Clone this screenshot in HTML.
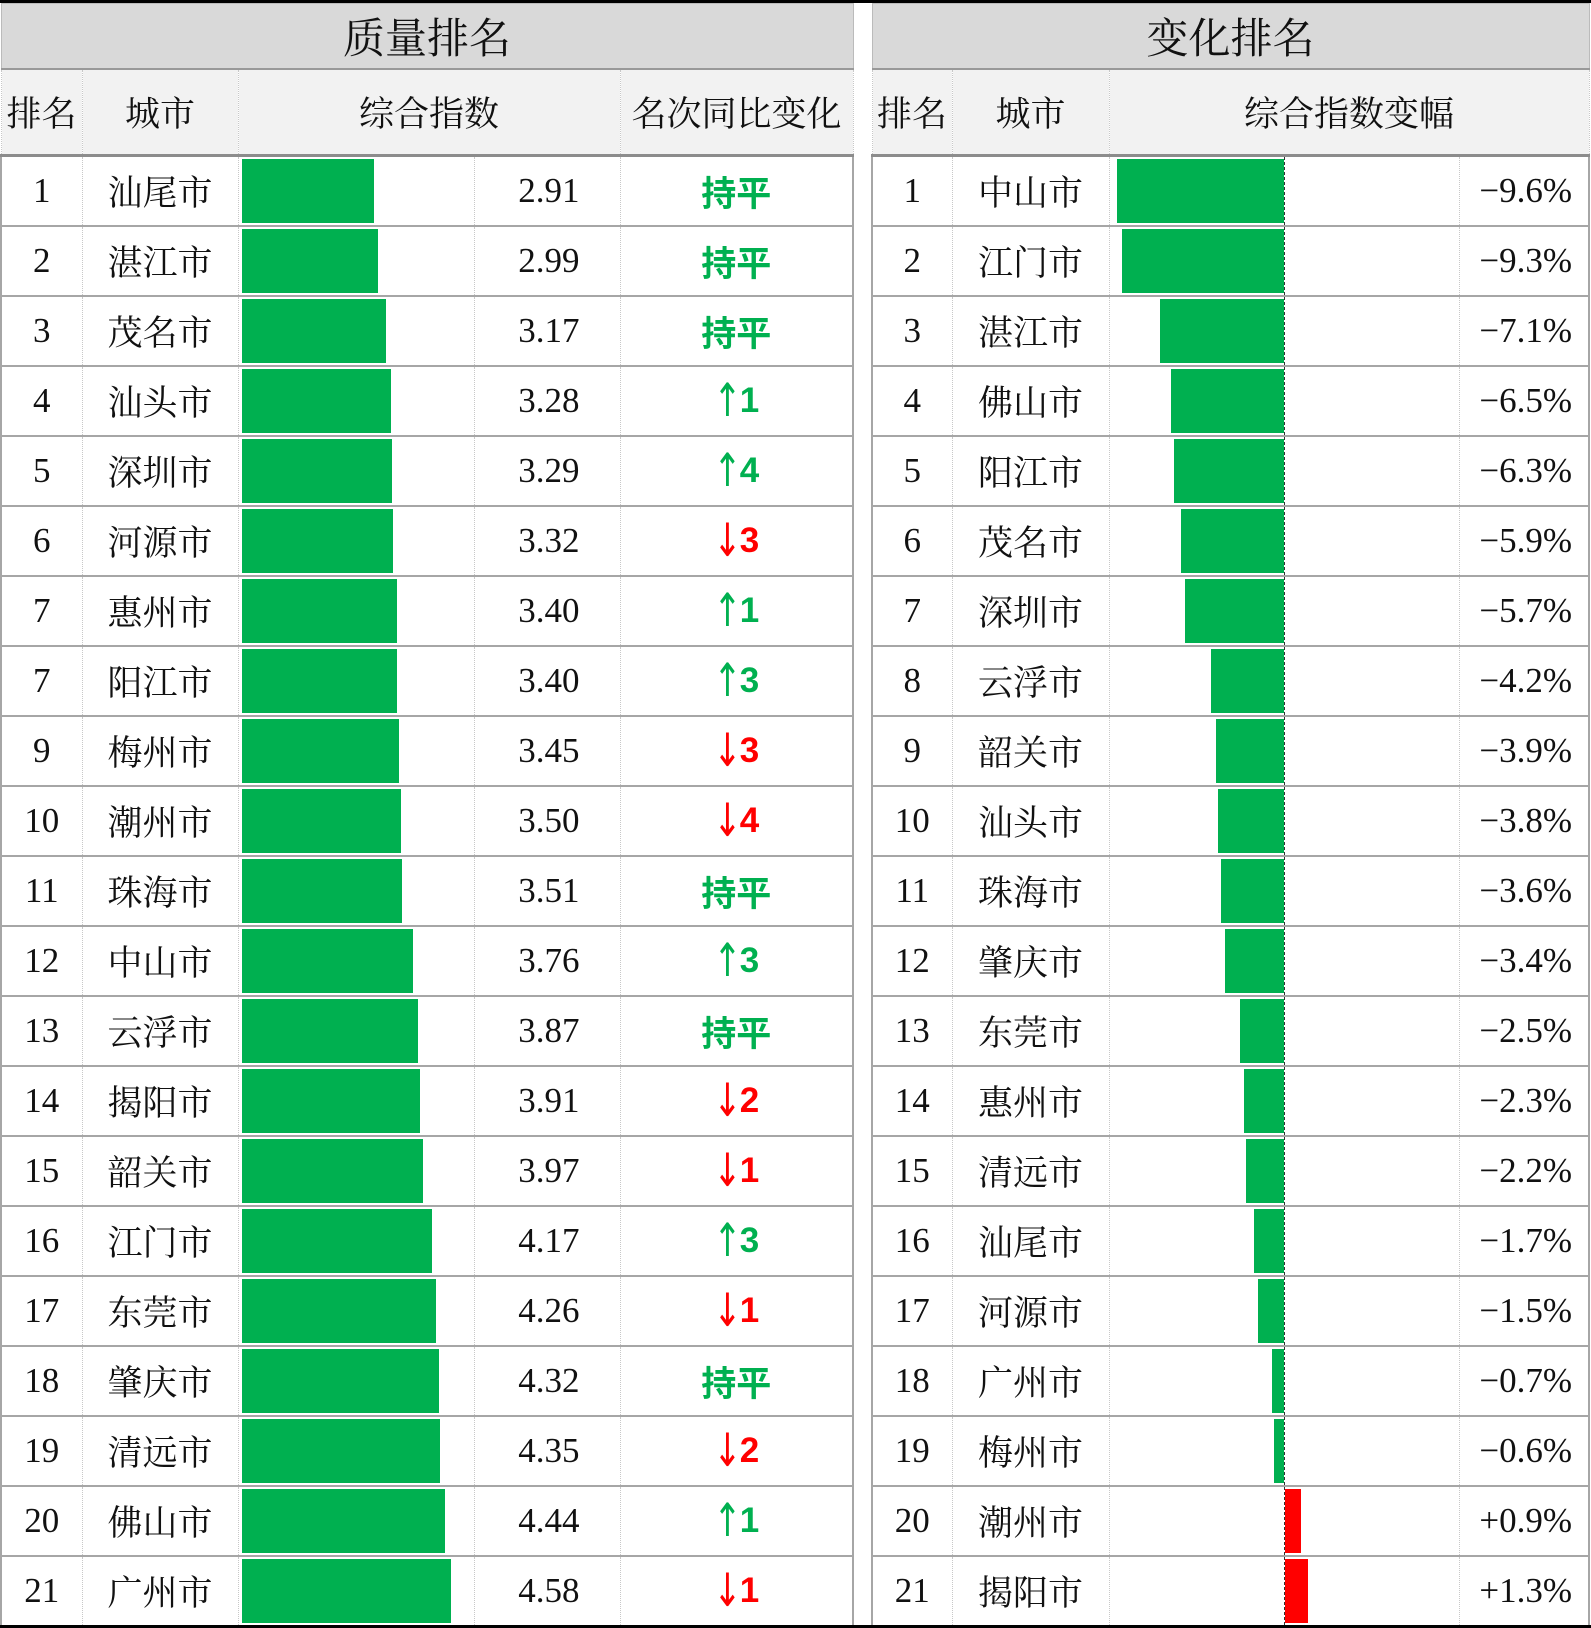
<!DOCTYPE html>
<html><head><meta charset="utf-8"><style>
body{margin:0;width:1591px;height:1628px;background:#fff;position:relative;overflow:hidden;font-family:"Liberation Serif","Noto Serif CJK SC",serif;}
.top{position:absolute;left:0;top:0;width:1591px;height:3px;background:#000}
.bot{position:absolute;left:0;top:1625px;width:1591px;height:3px;background:#000}
table{position:absolute;top:3px;border-collapse:collapse;table-layout:fixed}
td{padding:0;font-size:35px;color:#111;text-align:center;border-left:1px dotted #c8c8c8;border-right:1px dotted #c8c8c8;border-bottom:2px solid #a6a6a6;height:68px;white-space:nowrap;overflow:hidden}
tr.t td{background:#d9d9d9;height:64px;font-size:42px;border:1px solid #bbb;border-bottom:2px solid #999}
tr.h td{background:#f2f2f2;height:84px;font-size:35px;border-bottom:3px solid #8c8c8c}
td.v{text-align:right;padding-right:40px}
td.bar{position:relative;text-align:left}
.g{position:absolute;top:2px;bottom:2px;background:#00b050}
.r{position:absolute;top:2px;bottom:2px;background:#ff0000}
.sg{color:#00b050;font-weight:bold;font-family:"Liberation Sans","Noto Sans CJK SC",sans-serif}
.sr{color:#ff0000;font-weight:bold;font-family:"Liberation Sans","Noto Sans CJK SC",sans-serif}
.a{display:inline-block;font-family:"DejaVu Sans",sans-serif;font-weight:normal;transform:scaleY(1.35);font-size:34px;margin-right:-2px}
td.first{border-left:2px solid #a6a6a6}
td.last{border-right:2px solid #a6a6a6}
td.ax{border-right:1px dashed #333}
td.rv{text-align:right;padding-right:16px}
</style></head><body>
<div class="top"></div>
<table style="left:0;width:852px">
<colgroup><col style="width:81px"><col style="width:156px"><col style="width:236px"><col style="width:146px"><col style="width:233px"></colgroup>
<tr class="t"><td colspan="5">质量排名</td></tr>
<tr class="h"><td>排名</td><td>城市</td><td colspan="2">综合指数</td><td>名次同比变化</td></tr>
<tr><td class="first">1</td><td>汕尾市</td><td class="bar"><div class="g" style="left:3px;width:132px"></div></td><td class="v">2.91</td><td class="last sg">持平</td></tr>
<tr><td class="first">2</td><td>湛江市</td><td class="bar"><div class="g" style="left:3px;width:136px"></div></td><td class="v">2.99</td><td class="last sg">持平</td></tr>
<tr><td class="first">3</td><td>茂名市</td><td class="bar"><div class="g" style="left:3px;width:144px"></div></td><td class="v">3.17</td><td class="last sg">持平</td></tr>
<tr><td class="first">4</td><td>汕头市</td><td class="bar"><div class="g" style="left:3px;width:149px"></div></td><td class="v">3.28</td><td class="last sg"><span class="a">↑</span>1</td></tr>
<tr><td class="first">5</td><td>深圳市</td><td class="bar"><div class="g" style="left:3px;width:150px"></div></td><td class="v">3.29</td><td class="last sg"><span class="a">↑</span>4</td></tr>
<tr><td class="first">6</td><td>河源市</td><td class="bar"><div class="g" style="left:3px;width:151px"></div></td><td class="v">3.32</td><td class="last sr"><span class="a">↓</span>3</td></tr>
<tr><td class="first">7</td><td>惠州市</td><td class="bar"><div class="g" style="left:3px;width:155px"></div></td><td class="v">3.40</td><td class="last sg"><span class="a">↑</span>1</td></tr>
<tr><td class="first">7</td><td>阳江市</td><td class="bar"><div class="g" style="left:3px;width:155px"></div></td><td class="v">3.40</td><td class="last sg"><span class="a">↑</span>3</td></tr>
<tr><td class="first">9</td><td>梅州市</td><td class="bar"><div class="g" style="left:3px;width:157px"></div></td><td class="v">3.45</td><td class="last sr"><span class="a">↓</span>3</td></tr>
<tr><td class="first">10</td><td>潮州市</td><td class="bar"><div class="g" style="left:3px;width:159px"></div></td><td class="v">3.50</td><td class="last sr"><span class="a">↓</span>4</td></tr>
<tr><td class="first">11</td><td>珠海市</td><td class="bar"><div class="g" style="left:3px;width:160px"></div></td><td class="v">3.51</td><td class="last sg">持平</td></tr>
<tr><td class="first">12</td><td>中山市</td><td class="bar"><div class="g" style="left:3px;width:171px"></div></td><td class="v">3.76</td><td class="last sg"><span class="a">↑</span>3</td></tr>
<tr><td class="first">13</td><td>云浮市</td><td class="bar"><div class="g" style="left:3px;width:176px"></div></td><td class="v">3.87</td><td class="last sg">持平</td></tr>
<tr><td class="first">14</td><td>揭阳市</td><td class="bar"><div class="g" style="left:3px;width:178px"></div></td><td class="v">3.91</td><td class="last sr"><span class="a">↓</span>2</td></tr>
<tr><td class="first">15</td><td>韶关市</td><td class="bar"><div class="g" style="left:3px;width:181px"></div></td><td class="v">3.97</td><td class="last sr"><span class="a">↓</span>1</td></tr>
<tr><td class="first">16</td><td>江门市</td><td class="bar"><div class="g" style="left:3px;width:190px"></div></td><td class="v">4.17</td><td class="last sg"><span class="a">↑</span>3</td></tr>
<tr><td class="first">17</td><td>东莞市</td><td class="bar"><div class="g" style="left:3px;width:194px"></div></td><td class="v">4.26</td><td class="last sr"><span class="a">↓</span>1</td></tr>
<tr><td class="first">18</td><td>肇庆市</td><td class="bar"><div class="g" style="left:3px;width:197px"></div></td><td class="v">4.32</td><td class="last sg">持平</td></tr>
<tr><td class="first">19</td><td>清远市</td><td class="bar"><div class="g" style="left:3px;width:198px"></div></td><td class="v">4.35</td><td class="last sr"><span class="a">↓</span>2</td></tr>
<tr><td class="first">20</td><td>佛山市</td><td class="bar"><div class="g" style="left:3px;width:203px"></div></td><td class="v">4.44</td><td class="last sg"><span class="a">↑</span>1</td></tr>
<tr><td class="first">21</td><td>广州市</td><td class="bar"><div class="g" style="left:3px;width:209px"></div></td><td class="v">4.58</td><td class="last sr"><span class="a">↓</span>1</td></tr>
</table>
<table style="left:871px;width:717px">
<colgroup><col style="width:80px"><col style="width:157px"><col style="width:175px"><col style="width:175px"><col style="width:130px"></colgroup>
<tr class="t"><td colspan="5">变化排名</td></tr>
<tr class="h"><td>排名</td><td>城市</td><td colspan="3">综合指数变幅</td></tr>
<tr><td class="first">1</td><td>中山市</td><td class="bar ax"><div class="g" style="right:0;width:167px"></div></td><td class="bar"></td><td class="last rv">−9.6%</td></tr>
<tr><td class="first">2</td><td>江门市</td><td class="bar ax"><div class="g" style="right:0;width:162px"></div></td><td class="bar"></td><td class="last rv">−9.3%</td></tr>
<tr><td class="first">3</td><td>湛江市</td><td class="bar ax"><div class="g" style="right:0;width:124px"></div></td><td class="bar"></td><td class="last rv">−7.1%</td></tr>
<tr><td class="first">4</td><td>佛山市</td><td class="bar ax"><div class="g" style="right:0;width:113px"></div></td><td class="bar"></td><td class="last rv">−6.5%</td></tr>
<tr><td class="first">5</td><td>阳江市</td><td class="bar ax"><div class="g" style="right:0;width:110px"></div></td><td class="bar"></td><td class="last rv">−6.3%</td></tr>
<tr><td class="first">6</td><td>茂名市</td><td class="bar ax"><div class="g" style="right:0;width:103px"></div></td><td class="bar"></td><td class="last rv">−5.9%</td></tr>
<tr><td class="first">7</td><td>深圳市</td><td class="bar ax"><div class="g" style="right:0;width:99px"></div></td><td class="bar"></td><td class="last rv">−5.7%</td></tr>
<tr><td class="first">8</td><td>云浮市</td><td class="bar ax"><div class="g" style="right:0;width:73px"></div></td><td class="bar"></td><td class="last rv">−4.2%</td></tr>
<tr><td class="first">9</td><td>韶关市</td><td class="bar ax"><div class="g" style="right:0;width:68px"></div></td><td class="bar"></td><td class="last rv">−3.9%</td></tr>
<tr><td class="first">10</td><td>汕头市</td><td class="bar ax"><div class="g" style="right:0;width:66px"></div></td><td class="bar"></td><td class="last rv">−3.8%</td></tr>
<tr><td class="first">11</td><td>珠海市</td><td class="bar ax"><div class="g" style="right:0;width:63px"></div></td><td class="bar"></td><td class="last rv">−3.6%</td></tr>
<tr><td class="first">12</td><td>肇庆市</td><td class="bar ax"><div class="g" style="right:0;width:59px"></div></td><td class="bar"></td><td class="last rv">−3.4%</td></tr>
<tr><td class="first">13</td><td>东莞市</td><td class="bar ax"><div class="g" style="right:0;width:44px"></div></td><td class="bar"></td><td class="last rv">−2.5%</td></tr>
<tr><td class="first">14</td><td>惠州市</td><td class="bar ax"><div class="g" style="right:0;width:40px"></div></td><td class="bar"></td><td class="last rv">−2.3%</td></tr>
<tr><td class="first">15</td><td>清远市</td><td class="bar ax"><div class="g" style="right:0;width:38px"></div></td><td class="bar"></td><td class="last rv">−2.2%</td></tr>
<tr><td class="first">16</td><td>汕尾市</td><td class="bar ax"><div class="g" style="right:0;width:30px"></div></td><td class="bar"></td><td class="last rv">−1.7%</td></tr>
<tr><td class="first">17</td><td>河源市</td><td class="bar ax"><div class="g" style="right:0;width:26px"></div></td><td class="bar"></td><td class="last rv">−1.5%</td></tr>
<tr><td class="first">18</td><td>广州市</td><td class="bar ax"><div class="g" style="right:0;width:12px"></div></td><td class="bar"></td><td class="last rv">−0.7%</td></tr>
<tr><td class="first">19</td><td>梅州市</td><td class="bar ax"><div class="g" style="right:0;width:10px"></div></td><td class="bar"></td><td class="last rv">−0.6%</td></tr>
<tr><td class="first">20</td><td>潮州市</td><td class="bar ax"></td><td class="bar"><div class="r" style="left:0;width:16px"></div></td><td class="last rv">+0.9%</td></tr>
<tr><td class="first">21</td><td>揭阳市</td><td class="bar ax"></td><td class="bar"><div class="r" style="left:0;width:23px"></div></td><td class="last rv">+1.3%</td></tr>
</table>
<div class="bot"></div>
</body></html>
